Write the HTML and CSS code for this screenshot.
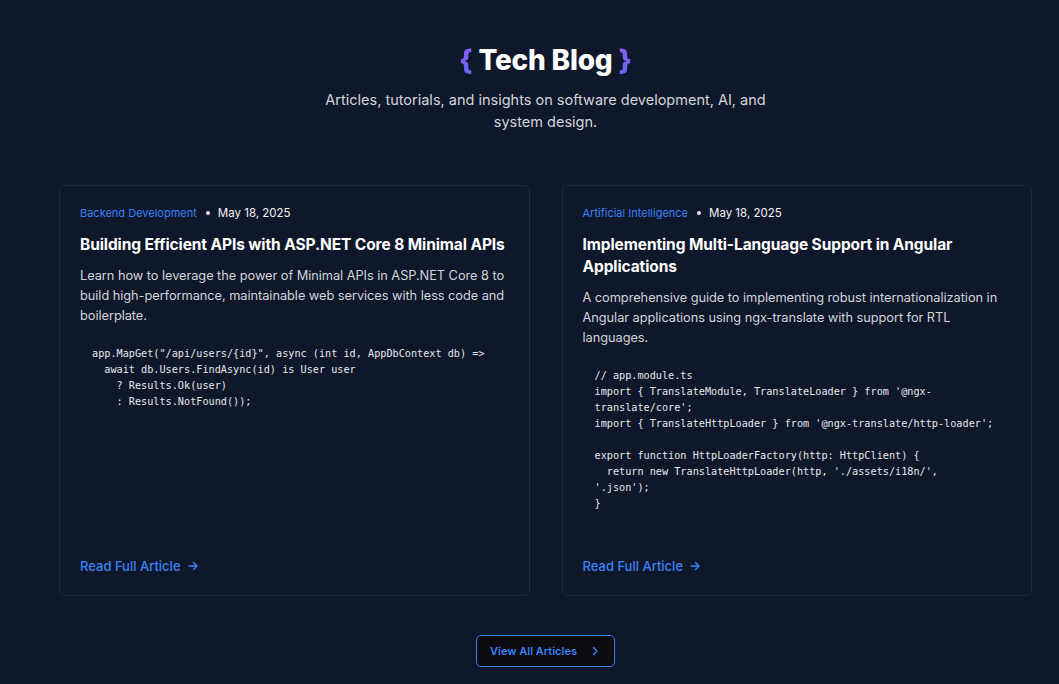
FILE: index.html
```html
<!DOCTYPE html>
<html lang="en">
<head>
<meta charset="utf-8">
<title>Tech Blog</title>
<link rel="stylesheet" href="styles.css">
</head>
<body>
<main class="page">
  <header class="intro">
    <h1 class="title"><span class="brace">{</span> Tech Blog <span class="brace">}</span></h1>
    <p class="subtitle">Articles, tutorials, and insights on software development, AI, and system design.</p>
  </header>

  <section class="grid">
    <article class="card">
      <div class="meta">
        <span class="category">Backend Development</span>
        <span class="dot"></span>
        <span class="date">May 18, 2025</span>
      </div>
      <h2 class="card-title">Building Efficient APIs with ASP.NET Core 8 Minimal APIs</h2>
      <p class="excerpt">Learn how to leverage the power of Minimal APIs in ASP.NET Core 8 to build high-performance, maintainable web services with less code and boilerplate.</p>
      <pre class="code">app.MapGet("/api/users/{id}", async (int id, AppDbContext db) =&gt;
  await db.Users.FindAsync(id) is User user
    ? Results.Ok(user)
    : Results.NotFound());</pre>
      <a class="read" href="#">Read Full Article
        <svg width="10" height="10" viewBox="0 0 10 10" fill="none" stroke="currentColor" stroke-width="1.4" stroke-linecap="round" stroke-linejoin="round"><path d="M1 5h8M5.5 1.5 9 5 5.5 8.5"/></svg>
      </a>
    </article>

    <article class="card">
      <div class="meta">
        <span class="category">Artificial Intelligence</span>
        <span class="dot"></span>
        <span class="date">May 18, 2025</span>
      </div>
      <h2 class="card-title">Implementing Multi-Language Support in Angular Applications</h2>
      <p class="excerpt">A comprehensive guide to implementing robust internationalization in Angular applications using ngx-translate with support for RTL languages.</p>
      <pre class="code">// app.module.ts
import { TranslateModule, TranslateLoader } from '@ngx-
translate/core';
import { TranslateHttpLoader } from '@ngx-translate/http-loader';

export function HttpLoaderFactory(http: HttpClient) {
  return new TranslateHttpLoader(http, './assets/i18n/',
'.json');
}</pre>
      <a class="read" href="#">Read Full Article
        <svg width="10" height="10" viewBox="0 0 10 10" fill="none" stroke="currentColor" stroke-width="1.4" stroke-linecap="round" stroke-linejoin="round"><path d="M1 5h8M5.5 1.5 9 5 5.5 8.5"/></svg>
      </a>
    </article>
  </section>

  <div class="more">
    <a class="btn" href="#">View All Articles
      <svg width="10" height="10" viewBox="0 0 10 10" fill="none" stroke="currentColor" stroke-width="1.3" stroke-linecap="round" stroke-linejoin="round"><path d="M3.5 1.5 7 5 3.5 8.5"/></svg>
    </a>
  </div>
</main>
</body>
</html>
```

FILE: styles.css
```css
* { box-sizing: border-box; }

html, body {
  margin: 0;
  background: #0f172a;
}

body {
  font-family: Inter, "Noto Sans", "Liberation Sans", sans-serif;
  color: #e5e7eb;
  height: 684px;
  overflow: hidden;
}

.page {
  padding: 40px 27px 0 59px;
}

.intro {
  display: flex;
  flex-direction: column;
  align-items: center;
}

.title {
  margin: 0;
  font-size: 28px;
  line-height: 40px;
  font-weight: 800;
  color: #ffffff;
  letter-spacing: -0.2px;
}

.brace {
  color: #7c5cf0;
  background: linear-gradient(180deg, #8b5cf6, #6366f1);
  -webkit-background-clip: text;
  background-clip: text;
  -webkit-text-fill-color: transparent;
}

.subtitle {
  margin: 9px 0 0;
  width: 450px;
  text-align: center;
  font-size: 14.5px;
  line-height: 22px;
  color: #d1d5db;
}

.grid {
  margin-top: 52px;
  display: grid;
  grid-template-columns: 1fr 1fr;
  gap: 32px;
}

.card {
  display: flex;
  flex-direction: column;
  height: 411px;
  padding: 19px 20px 19px 20px;
  border: 1px solid #1e293b;
  border-radius: 6px;
  background: #0f172a;
}

.meta {
  display: flex;
  align-items: center;
  font-size: 11px;
  line-height: 16px;
  height: 16px;
}

.category {
  color: #3b82f6;
}

.dot {
  width: 4px;
  height: 4px;
  border-radius: 50%;
  background: #e5e7eb;
  margin: 0 8px 0 9px;
}

.date {
  color: #f3f4f6;
  font-weight: 400;
  font-size: 11.5px;
}

.card-title {
  margin: 13px 0 0;
  font-size: 15.5px;
  line-height: 22px;
  font-weight: 700;
  color: #ffffff;
  letter-spacing: -0.1px;
}

.excerpt {
  margin: 10px 0 0;
  font-size: 12.8px;
  line-height: 20px;
  letter-spacing: -0.05px;
  color: #d1d5db;
}

.code {
  margin: 20px 0 0;
  padding: 0 0 0 12px;
  font-family: "DejaVu Sans Mono", "Liberation Mono", monospace;
  font-size: 10.2px;
  line-height: 16px;
  color: #e5e7eb;
  white-space: pre;
}

.read {
  margin-top: auto;
  display: flex;
  align-items: center;
  gap: 7px;
  font-size: 13px;
  line-height: 20px;
  font-weight: 500;
  color: #3b82f6;
  text-decoration: none;
}

.more {
  display: flex;
  justify-content: center;
  margin-top: 39px;
}

.btn {
  display: flex;
  align-items: center;
  gap: 13px;
  height: 32px;
  padding: 0 14px 0 13px;
  border: 1px solid #3b82f6;
  border-radius: 5px;
  background: #0a0a0f;
  color: #3b82f6;
  font-size: 11px;
  font-weight: 600;
  text-decoration: none;
}
```
